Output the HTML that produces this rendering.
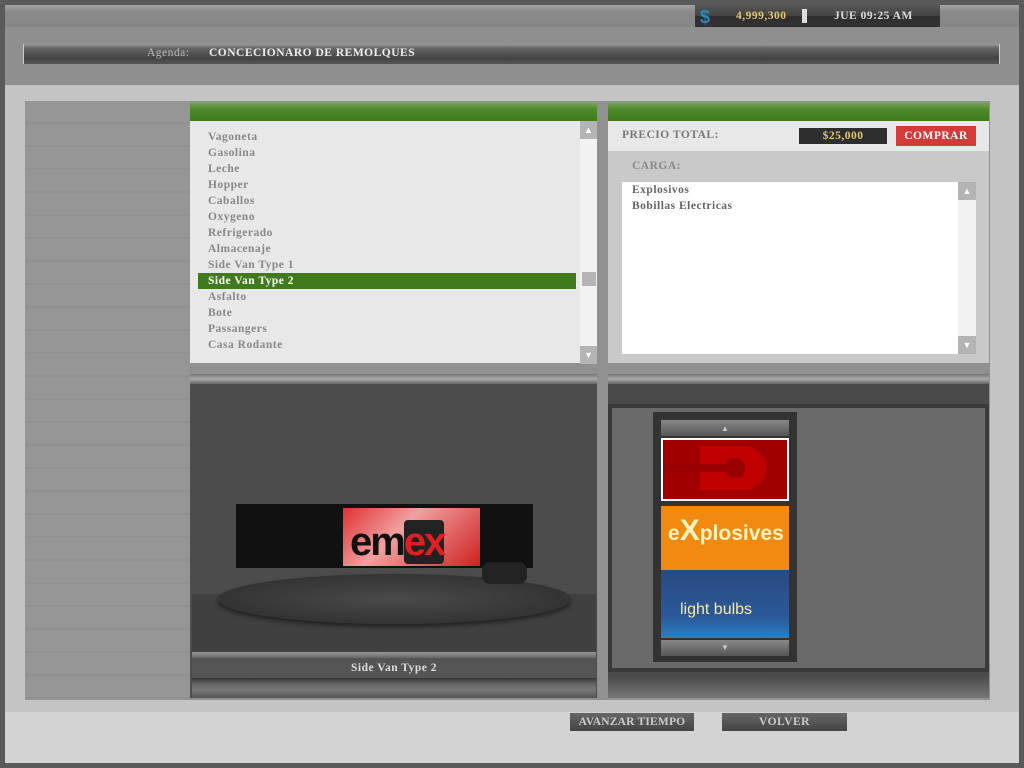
<!DOCTYPE html>
<html><head><style>
*{margin:0;padding:0;box-sizing:border-box}
body{width:1024px;height:768px;background:#5a5a5a;position:relative;overflow:hidden;font-family:"Liberation Serif","DejaVu Serif",serif;font-weight:bold}
.a{position:absolute}
.t{font-size:11.5px;letter-spacing:0.5px}
</style></head><body>
<div class="a" style="left:5px;top:5px;width:1014px;height:80px;background:#8f8f8f"></div>
<div class="a" style="left:5px;top:5px;width:1014px;height:22px;background:linear-gradient(#a4a4a4,#8a8a8a 30%,#868686)"></div>
<div class="a" style="left:695px;top:5px;width:245px;height:22px;background:linear-gradient(#555,#444 50%,#2e2e2e 50%,#333)"></div>
<div class="a" style="left:700px;top:7px;color:#1a8fc0;font-size:18px;font-family:'Liberation Sans',sans-serif">$</div>
<div class="a t" style="left:736px;top:10px;color:#e8c470">4,999,300</div>
<div class="a" style="left:802px;top:9px;width:5px;height:14px;background:#ddd"></div>
<div class="a t" style="left:834px;top:10px;color:#ddd">JUE 09:25 AM</div>
<div class="a" style="left:23px;top:44px;width:977px;height:20px;background:linear-gradient(#999,#666 20%,#444 70%,#555);border-left:1px solid #ccc;border-right:1px solid #ccc"></div>
<div class="a t" style="left:147px;top:47px;color:#bbb;font-weight:normal">Agenda:</div>
<div class="a t" style="left:209px;top:47px;color:#eee">CONCECIONARO DE REMOLQUES</div>
<div class="a" style="left:5px;top:85px;width:1014px;height:627px;background:#c4c4c4"></div>
<div class="a" style="left:5px;top:712px;width:1014px;height:51px;background:#d3d3d3"></div>
<div class="a" style="left:25px;top:101px;width:965px;height:599px;background:#909090"></div>
<div class="a" style="left:25px;top:101px;width:165px;height:599px;background:repeating-linear-gradient(#969696 0,#969696 21px,#919191 21px,#919191 23px)"></div>
<!-- list panel -->
<div class="a" style="left:190px;top:102px;width:407px;height:19px;background:linear-gradient(#7aa860,#4e8a2a 40%,#3f7a1c)"></div>
<div class="a" style="left:190px;top:121px;width:407px;height:242px;background:#e8e8e8"></div>
<div class="a" style="left:580px;top:121px;width:17px;height:242px;background:#f2f2f2"></div>
<div class="a" style="left:580px;top:121px;width:17px;height:18px;background:#b4b4b4;color:#fff;font-size:9px;text-align:center;line-height:18px">▲</div>
<div class="a" style="left:582px;top:272px;width:14px;height:14px;background:#b4b4b4"></div>
<div class="a" style="left:580px;top:346px;width:17px;height:18px;background:#b4b4b4;color:#fff;font-size:9px;text-align:center;line-height:18px">▼</div>
<div class="a" style="left:198px;top:273px;width:378px;height:16px;background:#3f7a1f"></div>
<div class="a t" style="left:208px;top:129px;color:#888;line-height:16px">Vagoneta<br>Gasolina<br>Leche<br>Hopper<br>Caballos<br>Oxygeno<br>Refrigerado<br>Almacenaje<br>Side Van Type 1<br><span style="color:#fff">Side Van Type 2</span><br>Asfalto<br>Bote<br>Passangers<br>Casa Rodante</div>
<!-- right top -->
<div class="a" style="left:608px;top:102px;width:381px;height:19px;background:linear-gradient(#7aa860,#4e8a2a 40%,#3f7a1c)"></div>
<div class="a" style="left:608px;top:121px;width:381px;height:30px;background:#e8e8e8"></div>
<div class="a" style="left:608px;top:151px;width:381px;height:212px;background:#c9c9c9"></div>
<div class="a t" style="left:622px;top:129px;color:#777">PRECIO TOTAL:</div>
<div class="a t" style="left:799px;top:128px;width:88px;height:16px;background:#2e2e2e;color:#e8c470;text-align:center;line-height:16px">$25,000</div>
<div class="a t" style="left:896px;top:126px;width:80px;height:20px;background:#d43a3a;color:#fff;text-align:center;line-height:20px">COMPRAR</div>
<div class="a t" style="left:632px;top:160px;color:#888">CARGA:</div>
<div class="a" style="left:622px;top:182px;width:354px;height:172px;background:#fff"></div>
<div class="a" style="left:958px;top:182px;width:18px;height:172px;background:#f2f2f2"></div>
<div class="a" style="left:958px;top:182px;width:18px;height:18px;background:#b4b4b4;color:#fff;font-size:9px;text-align:center;line-height:18px">▲</div>
<div class="a" style="left:958px;top:336px;width:18px;height:18px;background:#b4b4b4;color:#fff;font-size:9px;text-align:center;line-height:18px">▼</div>
<div class="a t" style="left:632px;top:182px;color:#666;line-height:16px">Explosivos<br>Bobillas Electricas</div>
<!-- bottom left -->
<div class="a" style="left:190px;top:374px;width:407px;height:324px;background:#4c4c4c"></div>
<div class="a" style="left:190px;top:374px;width:407px;height:10px;background:linear-gradient(#777,#aaa 50%,#666)"></div>
<div class="a" style="left:192px;top:594px;width:404px;height:58px;background:#404040"></div>
<div class="a" style="left:218px;top:574px;width:353px;height:50px;border-radius:50%;background:radial-gradient(#4a4a4a,#2a2a2a);box-shadow:0 3px 4px #222"></div>
<div class="a" style="left:236px;top:504px;width:297px;height:64px;background:#111"></div>
<div class="a" style="left:343px;top:508px;width:137px;height:58px;background:linear-gradient(135deg,#e03030,#f0a0a0 40%,#d02020)"></div>
<div class="a" style="left:350px;top:520px;font-family:'Liberation Sans',sans-serif;font-size:40px;color:#111;letter-spacing:-2px">em<span style="color:#e02020;background:#222;border-radius:4px">ex</span></div>
<div class="a" style="left:482px;top:562px;width:45px;height:22px;background:#222;border-radius:8px"></div>
<div class="a" style="left:192px;top:652px;width:404px;height:6px;background:linear-gradient(#999,#666)"></div>
<div class="a" style="left:192px;top:658px;width:404px;height:20px;background:#555;color:#ddd;font-size:11.5px;letter-spacing:0.5px;text-align:center;line-height:20px">Side Van Type 2</div>
<div class="a" style="left:192px;top:678px;width:404px;height:20px;background:linear-gradient(#333,#666 30%,#777 60%,#555)"></div>
<!-- bottom right -->
<div class="a" style="left:608px;top:374px;width:381px;height:324px;background:#4a4a4a"></div>
<div class="a" style="left:608px;top:374px;width:381px;height:10px;background:linear-gradient(#777,#aaa 50%,#666)"></div>
<div class="a" style="left:608px;top:404px;width:381px;height:268px;background:#6a6a6a;border:4px solid #3a3a3a"></div>
<div class="a" style="left:608px;top:676px;width:381px;height:22px;background:linear-gradient(#4a4a4a,#666 60%,#777)"></div>
<div class="a" style="left:653px;top:412px;width:144px;height:250px;background:#333"></div>
<div class="a" style="left:661px;top:420px;width:128px;height:16px;background:linear-gradient(#888,#555);color:#ccc;font-size:8px;text-align:center;line-height:18px">▲</div>
<div class="a" style="left:661px;top:438px;width:128px;height:63px;background:#a00000;border:2px solid #fff"></div>
<div class="a" style="left:700px;top:446px;width:66px;height:44px;border-radius:0 22px 22px 0;background:#c00000"></div>
<div class="a" style="left:663px;top:464px;width:70px;height:8px;background:#900"></div>
<div class="a" style="left:725px;top:458px;width:20px;height:20px;border-radius:50%;background:#900"></div>
<div class="a" style="left:661px;top:506px;width:128px;height:64px;background:#f08a10"></div>
<div class="a" style="left:668px;top:514px;font-family:'Liberation Sans',sans-serif;font-size:21px;color:#fff4c0">e<b style="font-size:30px">X</b>plosives</div>
<div class="a" style="left:661px;top:570px;width:128px;height:68px;background:linear-gradient(#2a4a80,#2a5a9a 70%,#2a80c0)"></div>
<div class="a" style="left:680px;top:601px;font-family:'Liberation Sans',sans-serif;font-size:16px;color:#ffe8a0;font-weight:normal">light bulbs</div>
<div class="a" style="left:661px;top:640px;width:128px;height:16px;background:linear-gradient(#888,#555);color:#ccc;font-size:8px;text-align:center;line-height:16px">▼</div>
<!-- buttons -->
<div class="a t" style="left:570px;top:713px;width:124px;height:18px;background:linear-gradient(#666,#444);color:#ccc;text-align:center;line-height:18px;letter-spacing:0.2px">AVANZAR TIEMPO</div>
<div class="a t" style="left:722px;top:713px;width:125px;height:18px;background:linear-gradient(#666,#444);color:#ccc;text-align:center;line-height:18px">VOLVER</div>
</body></html>
